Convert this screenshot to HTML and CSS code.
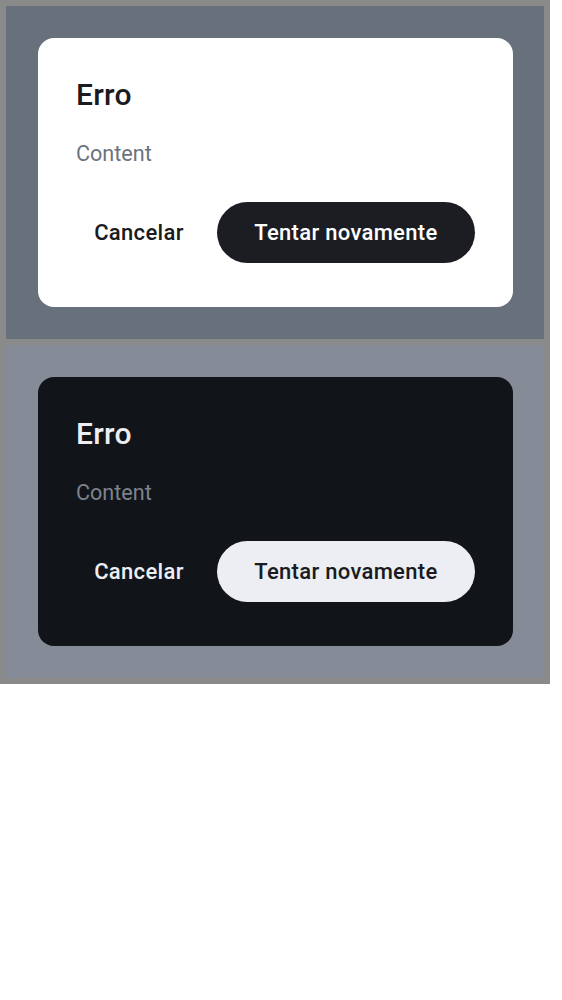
FILE: index.html
```html
<!DOCTYPE html>
<html lang="pt">
<head>
<meta charset="utf-8">
<link rel="stylesheet" href="styles.css">
</head>
<body>
<div class="frame">
  <section class="panel panel-light">
    <div class="dialog dialog-light">
      <h2 class="title">Erro</h2>
      <p class="content">Content</p>
      <div class="actions">
        <button class="btn btn-text">Cancelar</button>
        <button class="btn btn-filled">Tentar novamente</button>
      </div>
    </div>
  </section>
  <section class="panel panel-dark">
    <div class="dialog dialog-dark">
      <h2 class="title">Erro</h2>
      <p class="content">Content</p>
      <div class="actions">
        <button class="btn btn-text">Cancelar</button>
        <button class="btn btn-filled">Tentar novamente</button>
      </div>
    </div>
  </section>
</div>
</body>
</html>
```
FILE: styles.css
```css
* { box-sizing: border-box; }
html, body { margin: 0; padding: 0; background: #ffffff; }
body { font-family: Roboto, "Liberation Sans", sans-serif; }

.frame {
  width: 550px;
  background: #8a8a8a;
  padding: 6px;
  display: flex;
  flex-direction: column;
  gap: 6px;
}

.panel {
  height: 333px;
  padding: 32px 31px 32px 32px;
  display: flex;
}
.panel-light { background: #67707b; }
.panel-dark { background: #868c97; }

.dialog {
  flex: 1;
  min-width: 0;
  border-radius: 16px;
  padding: 39px 38px 44px 38px;
  display: flex;
  flex-direction: column;
}
.dialog-light { background: #ffffff; }
.dialog-dark { background: #111418; }

.title {
  margin: 0;
  font-family: "Roboto Medium", Roboto, sans-serif;
  font-size: 30px;
  line-height: 36px;
  font-weight: 400;
  letter-spacing: 0.3px;
}
.dialog-light .title { color: #1a1b20; }
.dialog-dark .title { color: #eceef3; }

.content {
  margin: 27px 0 0 0;
  font-size: 21.6px;
  line-height: 28px;
  font-weight: 400;
}
.dialog-light .content { color: #6c727d; }
.dialog-dark .content { color: #7d838e; }

.actions {
  margin-top: auto;
  display: flex;
  justify-content: flex-end;
  gap: 14px;
}

.btn {
  font-family: "Roboto Medium", Roboto, sans-serif;
  font-size: 22px;
  font-weight: 400;
  height: 61px;
  border: none;
  border-radius: 31px;
  padding: 0 37.5px;
  letter-spacing: 0.3px;
  white-space: nowrap;
  flex-shrink: 0;
  cursor: pointer;
}
.btn-text { background: transparent; padding: 0 19px; }
.dialog-light .btn-text { color: #1a1b20; }
.dialog-dark .btn-text { color: #eceef3; }
.dialog-light .btn-filled { background: #1c1d22; color: #ffffff; }
.dialog-dark .btn-filled { background: #eceef3; color: #1a1b20; }
```
